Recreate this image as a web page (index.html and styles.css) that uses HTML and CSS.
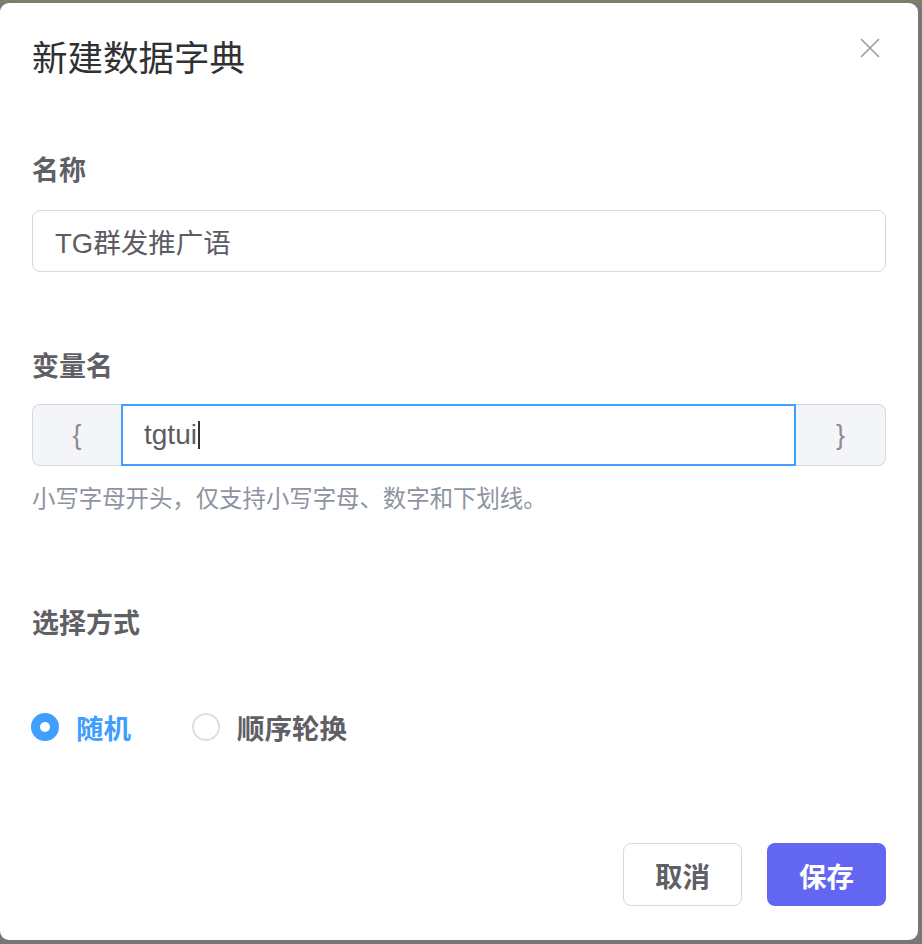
FILE: index.html
```html
<!DOCTYPE html>
<html lang="zh">
<head>
<meta charset="utf-8">
<title>新建数据字典</title>
<link rel="stylesheet" href="styles.css">
</head>
<body>
<div class="dialog">
  <div class="dialog-header">
    <h1 class="dialog-title">新建数据字典</h1>
    <button class="close-btn" aria-label="关闭">
      <svg width="20" height="20" viewBox="0 0 20 20"><path d="M1 1 L19 19 M19 1 L1 19" stroke="#9a9ba1" stroke-width="1.6" fill="none"/></svg>
    </button>
  </div>
  <div class="dialog-body">
    <div class="form-item item-name">
      <label class="form-label">名称</label>
      <div class="text-input">TG群发推广语</div>
    </div>
    <div class="form-item item-var">
      <label class="form-label">变量名</label>
      <div class="input-group">
        <span class="addon addon-left">{</span>
        <div class="group-input">tgtui<span class="caret"></span></div>
        <span class="addon addon-right">}</span>
      </div>
      <div class="hint">小写字母开头，仅支持小写字母、数字和下划线。</div>
    </div>
    <div class="form-item item-mode">
      <label class="form-label">选择方式</label>
      <div class="radio-group">
        <span class="radio checked"><span class="radio-circle"></span><span class="radio-text">随机</span></span>
        <span class="radio"><span class="radio-circle"></span><span class="radio-text">顺序轮换</span></span>
      </div>
    </div>
  </div>
  <div class="dialog-footer">
    <button class="btn btn-cancel">取消</button>
    <button class="btn btn-primary">保存</button>
  </div>
</div>
</body>
</html>
```

FILE: styles.css
```css
* { box-sizing: border-box; }
html, body { height: 100%; }
body {
  margin: 0;
  padding: 3px 4px 4px 0;
  background: linear-gradient(#827d67 0, #827d67 3px, #777777 3px);
  font-family: "Liberation Sans", "Noto Sans CJK SC", sans-serif;
}
.dialog {
  height: 100%;
  background: #fff;
  border-radius: 9px;
  display: flex;
  flex-direction: column;
}
.dialog-header {
  display: flex;
  justify-content: space-between;
  align-items: flex-start;
  padding: 32px 38px 0 32px;
}
.dialog-title {
  margin: 0;
  font-size: 35.5px;
  line-height: 48px;
  font-weight: 400;
  color: #303133;
}
.close-btn {
  border: 0;
  background: none;
  padding: 0;
  margin-top: 3px;
  width: 20px;
  height: 20px;
  display: flex;
}
.dialog-body {
  padding: 0 32px;
  flex: 1;
}
.form-label {
  display: block;
  font-size: 27px;
  line-height: 40px;
  font-weight: 700;
  color: #5f6066;
}
.item-name { margin-top: 68px; }
.item-name .form-label { margin-bottom: 19px; }
.text-input {
  height: 62px;
  border: 1.5px solid #d6d9e0;
  border-radius: 8px;
  padding: 0 22px;
  display: flex;
  align-items: center;
  font-size: 27.5px;
  color: #5c5d63;
}
.item-var { margin-top: 75px; }
.item-var .form-label { margin-bottom: 17px; }
.input-group {
  display: flex;
  height: 62px;
}
.addon {
  width: 89px;
  background: #f4f5f9;
  border: 1.5px solid #d6d9e0;
  display: flex;
  align-items: center;
  justify-content: center;
  font-size: 27px;
  color: #8c8d92;
}
.addon-left { border-right: 0; border-radius: 8px 0 0 8px; }
.addon-right { border-left: 0; border-radius: 0 8px 8px 0; width: 90px; }
.group-input {
  flex: 1;
  border: 2px solid #409eff;
  padding: 0 21px;
  display: flex;
  align-items: center;
  font-size: 28px;
  color: #5c5d63;
}
.caret {
  display: inline-block;
  width: 2px;
  height: 28px;
  background: #333;
  margin-left: 1px;
}
.hint {
  margin-top: 17px;
  font-size: 23.4px;
  line-height: 32px;
  color: #8d93a0;
}
.item-mode { margin-top: 89px; }
.radio-group {
  display: flex;
  gap: 62px;
  margin-top: 63px;
  height: 40px;
  align-items: center;
}
.radio {
  display: flex;
  align-items: center;
  gap: 17px;
}
.radio-circle {
  width: 28px;
  height: 28px;
  border-radius: 50%;
  border: 2px solid #dcdfe6;
  background: #fff;
  display: flex;
  align-items: center;
  justify-content: center;
  margin-left: -1px;
}
.radio.checked .radio-circle {
  border-color: #409eff;
  background: #409eff;
}
.radio.checked .radio-circle::after {
  content: "";
  width: 10px;
  height: 10px;
  border-radius: 50%;
  background: #fff;
}
.radio-text {
  font-size: 27.5px;
  font-weight: 700;
  color: #5f6066;
}
.radio.checked .radio-text { color: #409eff; }
.dialog-footer {
  display: flex;
  justify-content: flex-end;
  gap: 25px;
  padding: 0 32px 34px;
}
.btn {
  width: 119px;
  height: 63px;
  border-radius: 8px;
  font-family: "Liberation Sans", "Noto Sans CJK SC", sans-serif;
  font-size: 27.5px;
  font-weight: 700;
  padding: 0;
}
.btn-cancel {
  background: #fff;
  border: 1.5px solid #d6d9e0;
  color: #5f6066;
}
.btn-primary {
  background: #6366f1;
  border: 0;
  color: #fff;
}
```
